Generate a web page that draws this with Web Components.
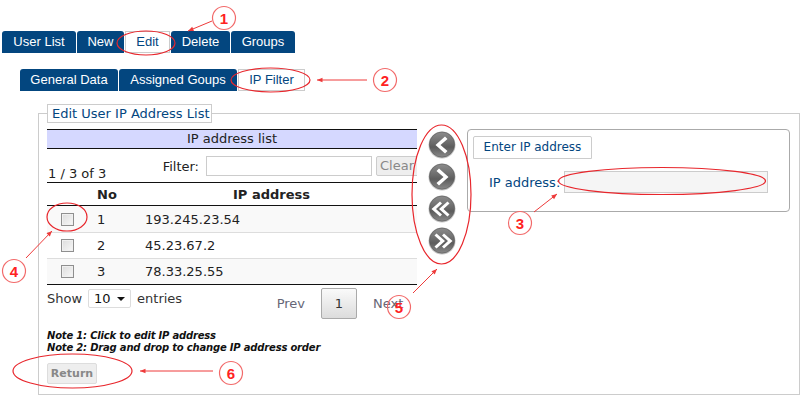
<!DOCTYPE html>
<html>
<head>
<meta charset="utf-8">
<title>Edit User IP Address List</title>
<style>
html, body { margin: 0; background: #fff; }
body { position: relative; width: 811px; height: 407px; overflow: hidden; font-family: "DejaVu Sans", Verdana, sans-serif; font-size: 13px; color: #222; }
</style>
</head>
<body>
<user-page></user-page>
<note-layer></note-layer>
<script>
const blue = "#03467f";

class TabBar extends HTMLElement {
    constructor() {
        super();
        this.attachShadow({ mode: "open" }).innerHTML = `<style>
        :host { display: flex; gap: 1px; height: 22px; }
        </style><slot></slot>`;
    }
}
customElements.define("tab-bar", TabBar);

class TabItem extends HTMLElement {
    constructor() {
        super();
        this.attachShadow({ mode: "open" }).innerHTML = `<style>
        :host {
            display: block;
            box-sizing: border-box;
            height: 22px;
            text-align: center;
            font: 13px/22px "Liberation Sans", Arial, sans-serif;
            background: ${blue};
            color: #fff;
            border-radius: 3px 3px 0 0;
        }
        :host([active]) {
            background: #fff;
            color: ${blue};
            border: 1px solid #ccc;
            border-radius: 0;
            line-height: 20px;
        }
        </style><slot></slot>`;
    }
    connectedCallback() {
        this.style.width = this.getAttribute("w") + "px";
    }
}
customElements.define("tab-item", TabItem);

class NavRound extends HTMLElement {
    constructor() {
        super();
        const shapes = {
            prev: "M7.5 14 L17 5.5 L19.5 8 L12.5 14 L19.5 20 L17 22.5 Z",
            next: "M20.5 14 L11 5.5 L8.5 8 L15.5 14 L8.5 20 L11 22.5 Z",
            first: "M3.5 14 L12 6.5 L14 8.5 L8 14 L14 19.5 L12 21.5 Z M11 14 L19.5 6.5 L21.5 8.5 L15.5 14 L21.5 19.5 L19.5 21.5 Z",
            last: "M24.5 14 L16 6.5 L14 8.5 L20 14 L14 19.5 L16 21.5 Z M17 14 L8.5 6.5 L6.5 8.5 L12.5 14 L6.5 19.5 L8.5 21.5 Z"
        };
        const kind = this.getAttribute("kind");
        this.attachShadow({ mode: "open" }).innerHTML = `<style>
        :host { display: block; width: 28px; height: 28px; }
        svg { display: block; }
        </style>
        <svg width="28" height="28" viewBox="0 0 28 28">
            <defs>
                <linearGradient id="g" x1="0" y1="0" x2="0" y2="1">
                    <stop offset="0" stop-color="#8c8c8c"/>
                    <stop offset="0.45" stop-color="#6a6a6a"/>
                    <stop offset="0.6" stop-color="#5c5c5c"/>
                    <stop offset="1" stop-color="#8a8a8a"/>
                </linearGradient>
            </defs>
            <circle cx="14" cy="14" r="13.5" fill="#c4c4c4"/>
            <circle cx="14" cy="13.6" r="12.6" fill="url(#g)" stroke="#555" stroke-width="0.6"/>
            <path d="${shapes[kind]}" fill="#fff"/>
        </svg>`;
    }
}
customElements.define("nav-round", NavRound);

class IpTable extends HTMLElement {
    constructor() {
        super();
        const rows = [["1", "193.245.23.54"], ["2", "45.23.67.2"], ["3", "78.33.25.55"]];
        const body = rows.map(r => `<tr>
            <td><span class="check"></span></td>
            <td>${r[0]}</td>
            <td class="ip">${r[1]}</td>
        </tr>`).join("");
        this.attachShadow({ mode: "open" }).innerHTML = `<style>
        :host { display: block; width: 370px; }
        .title {
            box-sizing: border-box;
            height: 20px;
            line-height: 18px;
            text-align: center;
            background: #d5d8ff;
            border-top: 1px solid #111;
            border-bottom: 1px solid #111;
        }
        .filter-row {
            display: flex;
            justify-content: space-between;
            height: 33px;
            overflow: hidden;
        }
        .info { align-self: flex-end; margin: 0 0 1px 1px; line-height: 15px; }
        .filter { display: flex; align-items: center; height: 20px; margin-top: 7px; margin-right: -5px; }
        .filter input {
            box-sizing: border-box;
            width: 166px;
            height: 20px;
            margin: 0 4px 0 7px;
            border: 1px solid #ccc;
            background: #fff;
            padding: 0;
        }
        .clear {
            box-sizing: border-box;
            width: 46px;
            height: 20px;
            line-height: 18px;
            padding-left: 3px;
            color: #888;
            background: #eee;
            border: 1px solid #ccc;
            border-radius: 2px;
        }
        table { width: 370px; border-collapse: collapse; table-layout: fixed; border-top: 1px solid #111; border-bottom: 1px solid #111; font-size: 13px; color: #222; }
        th { height: 22px; padding: 0; font-weight: bold; text-align: left; border-bottom: 1px solid #111; }
        th.ip-head { text-align: center; padding-right: 9px; }
        td { height: 25px; padding: 0; border-top: 1px solid #ddd; }
        tr:first-child td { border-top: 0; height: 26px; }
        tbody tr:nth-child(odd) td { background: #f9f9f9; }
        td:first-child { padding-left: 14px; }
        td.ip { padding-left: 10px; }
        .check {
            display: block;
            box-sizing: border-box;
            width: 13px;
            height: 13px;
            border: 1px solid #8f8f8f;
            background: linear-gradient(135deg, #dcdcdc, #f8f8f8);
            box-shadow: inset 0 0 0 1px #f0f0f0;
        }
        </style>
        <div class="title">IP address list</div>
        <div class="filter-row">
            <span class="info">1 / 3 of 3</span>
            <span class="filter"><label>Filter:</label><input type="text"><span class="clear">Clear</span></span>
        </div>
        <table>
            <colgroup><col style="width:50px"><col style="width:38px"><col></colgroup>
            <thead><tr><th></th><th>No</th><th class="ip-head">IP address</th></tr></thead>
            <tbody>${body}</tbody>
        </table>`;
    }
}
customElements.define("ip-table", IpTable);

class TableFooter extends HTMLElement {
    constructor() {
        super();
        this.attachShadow({ mode: "open" }).innerHTML = `<style>
        :host { display: flex; width: 370px; height: 34px; color: #333; }
        .show { display: flex; align-items: center; height: 18px; margin-top: 4px; }
        .select {
            box-sizing: border-box;
            position: relative;
            width: 43px;
            height: 19px;
            line-height: 17px;
            margin: 0 6px 0 6px;
            padding-left: 5px;
            border: 1px solid #ddd;
            border-radius: 2px;
            color: #111;
        }
        .select i {
            position: absolute;
            right: 5px;
            top: 7px;
            width: 0;
            height: 0;
            border: 4px solid transparent;
            border-top: 4px solid #111;
            border-bottom: 0;
        }
        .pages { display: flex; align-items: center; margin: 3px 0 0 auto; height: 31px; color: #667; }
        .pages .num {
            box-sizing: border-box;
            width: 36px;
            height: 31px;
            line-height: 29px;
            margin: 0 16px;
            text-align: center;
            color: #333;
            border: 1px solid #aaa;
            border-radius: 2px;
            background: linear-gradient(#fafafa, #dcdcdc);
        }
        .pages .next { width: 44px; }
        </style>
        <span class="show">Show<span class="select">10<i></i></span>entries</span>
        <span class="pages"><span>Prev</span><span class="num">1</span><span class="next">Next</span></span>`;
    }
}
customElements.define("table-footer", TableFooter);

class EnterPanel extends HTMLElement {
    constructor() {
        super();
        this.attachShadow({ mode: "open" }).innerHTML = `<style>
        :host {
            display: block;
            box-sizing: border-box;
            width: 323px;
            height: 83px;
            padding: 6px 5px;
            border: 1px solid #aaa;
            border-radius: 4px;
            color: ${blue};
        }
        .tab {
            box-sizing: border-box;
            width: 119px;
            height: 23px;
            line-height: 21px;
            font-size: 12px;
            text-align: center;
            border: 1px solid #ccc;
            border-radius: 2px 2px 0 0;
        }
        .row { display: flex; align-items: center; margin: 12px 0 0 16px; }
        .row span { width: 75px; }
        .field {
            box-sizing: border-box;
            width: 204px;
            height: 22px;
            background: #f5f5f5;
            border: 1px solid #ccc;
        }
        </style>
        <div class="tab">Enter IP address</div>
        <div class="row"><span>IP address:</span><div class="field"></div></div>`;
    }
}
customElements.define("enter-panel", EnterPanel);

class UserPage extends HTMLElement {
    constructor() {
        super();
        this.attachShadow({ mode: "open" }).innerHTML = `<style>
        :host { display: block; padding: 31px 0 0 2px; }
        .sub { margin: 16px 0 0 18px; }
        fieldset {
            box-sizing: border-box;
            width: 761px;
            height: 291px;
            margin: 13px 0 0 36px;
            padding: 6px 9px 0 8px;
            border: 1px solid #ccc;
        }
        legend {
            box-sizing: border-box;
            height: 19px;
            width: 165px;
            line-height: 17px;
            margin-left: 0;
            padding: 0 0 0 4px;
            text-align: left;
            white-space: nowrap;
            color: ${blue};
            border: 1px solid #ccc;
            background: #fff;
        }
        .columns { display: flex; }
        .left { width: 370px; }
        .nav { display: flex; flex-direction: column; gap: 4px; width: 50px; padding: 2px 0 0 11px; box-sizing: border-box; }
        .notes { margin-top: 11px; font-size: 10px; line-height: 12px; font-weight: bold; font-style: italic; letter-spacing: -0.19px; color: #111; }
        .return {
            box-sizing: border-box;
            width: 50px;
            height: 21px;
            line-height: 19px;
            margin-top: 9px;
            text-align: center;
            font-weight: bold;
            font-size: 11px;
            color: #888;
            background: #eee;
            border: 1px solid #ddd;
            border-radius: 2px;
        }
        </style>
        <tab-bar>
            <tab-item w="74">User List</tab-item>
            <tab-item w="47">New</tab-item>
            <tab-item w="45" active>Edit</tab-item>
            <tab-item w="59">Delete</tab-item>
            <tab-item w="64">Groups</tab-item>
        </tab-bar>
        <tab-bar class="sub">
            <tab-item w="98">General Data</tab-item>
            <tab-item w="118">Assigned Goups</tab-item>
            <tab-item w="67" active>IP Filter</tab-item>
        </tab-bar>
        <fieldset>
            <legend>Edit User IP Address List</legend>
            <div class="columns">
                <div class="left">
                    <ip-table></ip-table>
                    <table-footer></table-footer>
                    <div class="notes">Note 1: Click to edit IP address<br>Note 2: Drag and drop to change IP address order</div>
                    <div class="return">Return</div>
                </div>
                <div class="nav">
                    <nav-round kind="prev"></nav-round>
                    <nav-round kind="next"></nav-round>
                    <nav-round kind="first"></nav-round>
                    <nav-round kind="last"></nav-round>
                </div>
                <enter-panel></enter-panel>
            </div>
        </fieldset>`;
    }
}
customElements.define("user-page", UserPage);

// red callouts drawn over the screenshot
class NoteLayer extends HTMLElement {
    constructor() {
        super();
        const ellipses = [
            [146, 43, 29, 12], [270.5, 80, 39.5, 12], [662, 181, 103.5, 13.5],
            [67, 217, 20, 14], [441.5, 194.5, 29.5, 69.5], [72.5, 371, 59.5, 17]
        ];
        const arrows = [
            [212, 21, 188, 31], [367, 80, 317, 80], [534, 212, 557, 194],
            [26, 258, 52, 231], [413, 293, 437, 269], [213, 371, 140, 371]
        ];
        const marks = [[1, 224, 18], [2, 385, 80], [3, 520, 223], [4, 14, 271], [5, 399, 307], [6, 231, 373]];
        const arrowHead = (a) => {
            const ang = Math.atan2(a[3] - a[1], a[2] - a[0]);
            const pt = (d, s) => `${a[2] - Math.cos(ang + s) * d},${a[3] - Math.sin(ang + s) * d}`;
            return `<polygon points="${a[2]},${a[3]} ${pt(6, 0.4)} ${pt(6, -0.4)}" fill="#ee3a3a"/>`;
        };
        this.attachShadow({ mode: "open" }).innerHTML = `<style>
        :host { position: absolute; left: 0; top: 0; width: 811px; height: 407px; pointer-events: none; }
        svg { display: block; }
        text { font: bold 15px "Liberation Sans", Arial, sans-serif; fill: #f22; text-anchor: middle; }
        </style>
        <svg width="811" height="407">
            ${ellipses.map(e => `<ellipse cx="${e[0]}" cy="${e[1]}" rx="${e[2]}" ry="${e[3]}" fill="none" stroke="#e8262c" stroke-width="1.2"/>`).join("")}
            ${arrows.map(a => `<line x1="${a[0]}" y1="${a[1]}" x2="${a[2]}" y2="${a[3]}" stroke="#ee3a3a" stroke-width="1"/>${arrowHead(a)}`).join("")}
            ${marks.map(m => `<circle cx="${m[1]}" cy="${m[2]}" r="11.5" fill="none" stroke="#f26a6a" stroke-width="1.2"/><text x="${m[1]}" y="${m[2] + 5.5}">${m[0]}</text>`).join("")}
        </svg>`;
    }
}
customElements.define("note-layer", NoteLayer);
</script>
</body>
</html>
